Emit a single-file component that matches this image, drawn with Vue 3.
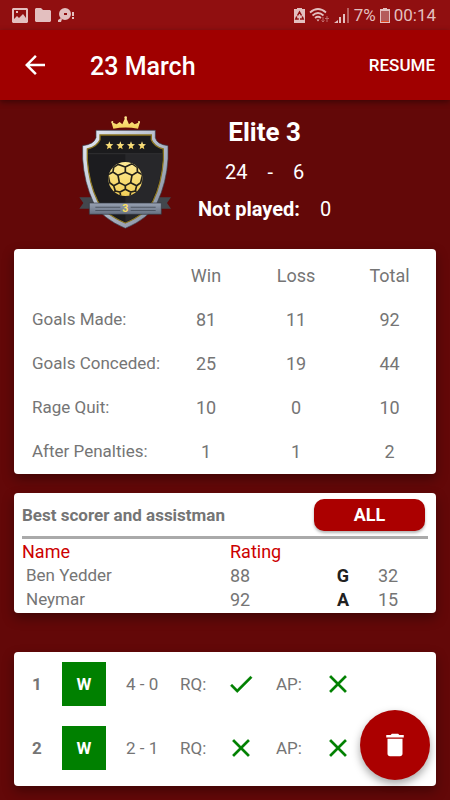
<script setup>
import { ref } from 'vue'

const title = ref('23 March')

const summary = ref({
  rank: 'Elite 3',
  won: 24,
  lost: 6,
  notPlayed: 0,
})

const stats = ref([
  { label: 'Goals Made:', win: 81, loss: 11, total: 92 },
  { label: 'Goals Conceded:', win: 25, loss: 19, total: 44 },
  { label: 'Rage Quit:', win: 10, loss: 0, total: 10 },
  { label: 'After Penalties:', win: 1, loss: 1, total: 2 },
])

const players = ref([
  { name: 'Ben Yedder', rating: 88, type: 'G', count: 32 },
  { name: 'Neymar', rating: 92, type: 'A', count: 15 },
])

const matches = ref([
  { id: 1, result: 'W', score: '4 - 0', rageQuit: true, penalties: false },
  { id: 2, result: 'W', score: '2 - 1', rageQuit: false, penalties: false },
])

const checkPath = 'M9 16.17 4.83 12l-1.42 1.41L9 19 21 7l-1.41-1.41z'
const closePath =
  'M19 6.41 17.59 5 12 10.59 6.41 5 5 6.41 10.59 12 5 17.59 6.41 19 12 13.41 17.59 19 19 17.59 13.41 12z'

function getFlagPath(value) {
  return value ? checkPath : closePath
}
</script>

<template>
  <div class="page">
    <!-- Status bar -->
    <div class="status-bar">
      <div class="status-left">
        <svg width="16" height="15" viewBox="0 0 16 15">
          <path
            fill-rule="evenodd"
            d="M1 0h14l1 1v13l-1 1H1l-1-1V1zM2 2v9l3-3 2 2 4-4 3 4V2zM4 3h2v2H4z"
          />
        </svg>
        <svg width="16" height="14" viewBox="0 0 16 14">
          <path d="M1 0h5l2 2h7l1 1v10l-1 1H1l-1-1V1z" />
        </svg>
        <svg width="17" height="15" viewBox="0 0 17 15">
          <path
            fill-rule="evenodd"
            d="M7 0a6 6 0 1 1 0 12A6 6 0 0 1 7 0zM6 5v2h3V5z"
          />
          <path d="M0 12l3-2 1 1-1 3H0zM14 4h2v4h-2zM14 9h2v2h-2z" />
        </svg>
      </div>
      <div class="status-right">
        <svg width="11" height="15" viewBox="0 0 11 15">
          <path d="M3 0h5v1h3v14H0V1h3z" />
          <path
            d="M3.500 7.500 5.500 4l2 3.500M2.800 8.500 1.800 11h3M8.200 8.500l1 2.500H6"
            fill="none"
            stroke="#900f10"
            stroke-width="1.500"
          />
        </svg>
        <svg width="21" height="15" viewBox="0 0 21 15">
          <path
            d="M1 4.500Q9 -2.500 17 4.500M3.500 7.500Q9 2.500 14.500 7.500M6 10Q9 7.500 12 10"
            fill="none"
            stroke="#e3bfbf"
            stroke-width="1.700"
          />
          <path d="M7.500 11.500h3L9 13.500z" />
          <path
            d="M14 9v5M12.500 12.500 14 14l1.500-1.500M18 14V8M16 10.500h4"
            fill="none"
            stroke="#c06a6a"
          />
        </svg>
        <svg width="16" height="15" viewBox="0 0 16 15">
          <path d="M0 15l4-3v3zM5 9h2v6H5zM9 6h2v9H9z" />
          <path d="M13 0h2v15h-2z" fill="#b86060" />
        </svg>
        <span>7%</span>
        <svg width="10" height="15" viewBox="0 0 10 15">
          <path d="M3 0h4v1h3v14H0V1h3z" />
          <path d="M1 3h8v10H1z" fill="#b45a5a" />
          <path d="M1 13h8v1H1z" fill="#e04a20" />
        </svg>
        <span>00:14</span>
      </div>
    </div>

    <!-- App bar -->
    <header class="app-bar">
      <button class="back-btn" type="button" aria-label="Back">
        <svg width="30" height="30" viewBox="0 0 24 24">
          <path d="M20 11H7.830l5.590-5.590L12 4l-8 8 8 8 1.410-1.410L7.830 13H20z" />
        </svg>
      </button>
      <h1>{{ title }}</h1>
      <button class="resume-btn" type="button">RESUME</button>
    </header>

    <main>
      <!-- Rank summary -->
      <section class="summary">
        <svg class="badge" width="92" height="113" viewBox="26 18 276 339">
          <defs>
            <linearGradient id="steel" x1="0" y1="0" x2="1" y2="1">
              <stop offset="0" stop-color="#e6ebf5" />
              <stop offset="0.5" stop-color="#b3bbcb" />
              <stop offset="1" stop-color="#7c8596" />
            </linearGradient>
            <linearGradient id="ribbon" x1="0" y1="0" x2="0" y2="1">
              <stop offset="0" stop-color="#98a2b3" />
              <stop offset="1" stop-color="#667081" />
            </linearGradient>
            <linearGradient id="gold" x1="0" y1="0" x2="0" y2="1">
              <stop offset="0" stop-color="#ffeb96" />
              <stop offset="1" stop-color="#f2cf58" />
            </linearGradient>
            <clipPath id="ball">
              <circle cx="165" cy="207" r="51" />
            </clipPath>
          </defs>
          <!-- ribbon tails -->
          <path d="M27 262h43v34H27l12-17zM302 262h-43v34h43l-12-17z" fill="#43474d" />
          <!-- shield -->
          <path
            d="M77 61h178v22q4 20 38 24v40q-4 70-33 132-26 47-95 76-69-29-95-76-29-62-33-132v-40q34-4 40-24z"
            fill="url(#steel)"
            stroke="#39404b"
            stroke-width="2"
          />
          <path
            d="M89 75h154v14q8 20 36 28v33q-5 70-31 123-21 40-83 66-62-26-83-66-26-53-31-123v-33q30-8 38-28z"
            fill="#1b1b1d"
            stroke="#8a7420"
            stroke-width="4"
          />
          <path d="M54 132h222v18q-5 68-31 121-21 40-80 66z" fill="#27272a" />
          <path d="M54 132h111v204q-59-26-80-66-26-52-31-120z" fill="#1c1c1f" />
          <path d="M54 131h222" stroke="#3a3a3e" stroke-width="2" />
          <!-- crown -->
          <path
            d="M129 56l-6-20 16 7 9-7 8 7 10-23 10 23 9-7 8 7 16-7-6 20q-37-7-74 0z"
            fill="url(#gold)"
          />
          <circle cx="166" cy="23" r="4" fill="#ffe98e" />
          <circle cx="126" cy="36" r="3" fill="#ffe98e" />
          <circle cx="206" cy="36" r="3" fill="#ffe98e" />
          <!-- stars -->
          <g fill="url(#gold)">
            <path
              v-for="x in [117, 150, 182, 215]"
              :key="x"
              :transform="`translate(${x} 106)`"
              d="M0-12 3-4l9 1-7 6 2 9-7-5-7 5 2-9-7-6 9-1z"
            />
          </g>
          <!-- ball -->
          <circle cx="165" cy="207" r="51" fill="url(#gold)" />
          <g clip-path="url(#ball)" fill="none" stroke="#25221a" stroke-width="5">
            <path d="M165 187l20 9-4 22-16 9-18-9-4-22z" />
            <path d="M165 187v-16l-22-8-4-12M165 171l20-10 3-12M185 196l16-10v-14l-16-11M143 196l-15-10 2-14 13-9" />
            <path d="M201 186l16 8M128 186l-15 8M201 172l8-6M130 172l-8-6" />
            <path d="M181 218l18 9 12-9 6-24M147 218l-17 9-12-9-5-24M199 227l-4 16M130 227l5 16" />
            <path d="M165 227v11l-16 8-14-3M165 238l16 8 14-3M149 246l2 13M181 246l-2 13M195 243l6 5M135 243l-6 5" />
          </g>
          <!-- ribbon -->
          <path d="M57 279h216v34H57z" fill="url(#ribbon)" stroke="#30363f" stroke-width="2" />
          <path d="M75 290h75v3H75zM75 300h75v3H75zM181 290h75v3h-75zM181 300h75v3h-75z" fill="#4d5562" />
          <text x="165" y="307" class="badge-level">3</text>
        </svg>
        <div class="summary-info">
          <h2>{{ summary.rank }}</h2>
          <div class="record">
            <span>{{ summary.won }}</span>
            <span>-</span>
            <span>{{ summary.lost }}</span>
          </div>
          <div class="not-played">
            <strong>Not played:</strong>
            <span>{{ summary.notPlayed }}</span>
          </div>
        </div>
      </section>

      <!-- Stats -->
      <section class="card stats">
        <table class="stats-table">
          <thead>
            <tr>
              <td></td>
              <th class="col-win" scope="col">Win</th>
              <th class="col-loss" scope="col">Loss</th>
              <th class="col-total" scope="col">Total</th>
            </tr>
          </thead>
          <tbody>
            <tr v-for="row in stats" :key="row.label">
              <th scope="row">{{ row.label }}</th>
              <td>{{ row.win }}</td>
              <td>{{ row.loss }}</td>
              <td>{{ row.total }}</td>
            </tr>
          </tbody>
        </table>
      </section>

      <!-- Best players -->
      <section class="card players">
        <div class="players-header">
          <h3>Best scorer and assistman</h3>
          <button class="all-btn" type="button">ALL</button>
        </div>
        <table class="players-table">
          <thead>
            <tr>
              <th scope="col">Name</th>
              <th class="col-rating" scope="col">Rating</th>
              <td class="col-type"></td>
              <td class="col-count"></td>
            </tr>
          </thead>
          <tbody>
            <tr v-for="player in players" :key="player.name">
              <td class="name">{{ player.name }}</td>
              <td>{{ player.rating }}</td>
              <td class="type">{{ player.type }}</td>
              <td class="count">{{ player.count }}</td>
            </tr>
          </tbody>
        </table>
      </section>

      <!-- Matches -->
      <ul class="card matches">
        <li v-for="match in matches" :key="match.id" class="match">
          <strong>{{ match.id }}</strong>
          <span class="result">{{ match.result }}</span>
          <span>{{ match.score }}</span>
          <span>RQ:</span>
          <svg class="flag" width="30" height="30" viewBox="0 0 24 24">
            <path :d="getFlagPath(match.rageQuit)" />
          </svg>
          <span>AP:</span>
          <svg class="flag" width="30" height="30" viewBox="0 0 24 24">
            <path :d="getFlagPath(match.penalties)" />
          </svg>
        </li>
      </ul>
    </main>

    <button class="delete-btn" type="button" aria-label="Delete">
      <svg width="30" height="30" viewBox="0 0 24 24">
        <path d="M6 19c0 1.100.9 2 2 2h8c1.100 0 2-.9 2-2V7H6zM19 4h-3.500l-1-1h-5l-1 1H5v2h14z" />
      </svg>
    </button>
  </div>
</template>

<style>
body {
  margin: 0;
  background: #630808;
}
</style>

<style scoped>
.page {
  min-height: 100vh;
  background: #630808;
  color: #757575;
  font-family: Roboto, 'Liberation Sans', sans-serif;
  font-size: 18px;
}

h1,
h2,
h3 {
  margin: 0;
}

button {
  padding: 0;
  border: none;
  background: none;
  color: white;
  font-family: inherit;
  cursor: pointer;
}

svg {
  display: block;
  flex: none;
}

.status-bar {
  display: flex;
  justify-content: space-between;
  align-items: center;
  height: 30px;
  padding: 0 14px 0 12px;
  background: #900f10;
  color: #e3bfbf;
  fill: #e3bfbf;
  font-size: 17px;
}

.status-left,
.status-right {
  display: flex;
  align-items: center;
  gap: 7px;
}

.status-right {
  gap: 4px;
}

.app-bar {
  position: relative;
  display: flex;
  align-items: center;
  height: 70px;
  padding: 0 15px 0 20px;
  background: #a00000;
  box-shadow: 0 2px 6px rgba(0, 0, 0, 0.4);
  color: white;
}

.back-btn svg,
.delete-btn svg {
  fill: white;
}

.app-bar h1 {
  flex: 1;
  margin-left: 40px;
  padding-top: 2px;
  font-size: 25px;
  font-weight: 500;
}

.resume-btn {
  font-size: 17px;
  font-weight: 500;
}

.summary {
  display: flex;
  gap: 27px;
  padding: 16px 0 20px 79px;
  color: white;
}

.badge-level {
  fill: #ffe060;
  font-size: 32px;
  font-weight: bold;
  text-anchor: middle;
}

.summary-info {
  display: flex;
  flex-direction: column;
  align-items: center;
  gap: 11px;
  font-size: 20px;
  line-height: 26px;
}

.summary-info h2 {
  font-size: 26px;
  line-height: 32px;
}

.record,
.not-played {
  display: flex;
  gap: 20px;
}

.card {
  margin: 0 14px;
  border-radius: 4px;
  background: white;
  box-shadow: 0 5px 12px rgba(0, 0, 0, 0.35);
}

.stats {
  padding: 4px 0 1px;
}

table {
  width: 100%;
  border-collapse: collapse;
  table-layout: fixed;
}

th,
td {
  padding: 0;
  font-weight: normal;
  white-space: nowrap;
}

.stats-table tr {
  height: 44px;
}

.stats-table td {
  text-align: center;
}

.stats-table tbody th {
  padding-left: 18px;
  font-size: 17px;
  text-align: left;
}

.col-win {
  width: 86px;
}

.col-loss {
  width: 94px;
}

.col-total {
  width: 93px;
}

.players {
  margin-top: 19px;
  padding: 0 8px 2px;
}

.players-header {
  display: flex;
  justify-content: space-between;
  align-items: center;
  height: 43px;
  padding-right: 3px;
  border-bottom: 3px solid #aaaaaa;
}

.players-header h3 {
  font-size: 17px;
}

.all-btn {
  width: 111px;
  height: 32px;
  border-radius: 10px;
  background: #ab0000;
  box-shadow: 0 2px 3px rgba(0, 0, 0, 0.3);
  font-size: 18px;
  font-weight: bold;
}

.players-table tr {
  height: 24px;
}

.players-table th {
  color: #cc0000;
  text-align: left;
}

.col-rating {
  width: 100px;
}

.col-type {
  width: 26px;
}

.col-count {
  width: 72px;
}

.name {
  padding-left: 4px;
  font-size: 17px;
}

.type {
  color: #212121;
  font-weight: bold;
  text-align: center;
}

.count {
  padding-left: 22px;
}

.matches {
  margin-top: 39px;
  padding: 0 18px 6px;
  list-style: none;
}

.match {
  display: grid;
  grid-template-columns: 30px 64px 54px 46px 50px 47px 30px;
  align-items: center;
  height: 64px;
  font-size: 17px;
}

.result {
  width: 44px;
  background: #008000;
  color: white;
  font-weight: bold;
  line-height: 44px;
  text-align: center;
}

.flag {
  fill: #008000;
  stroke: #008000;
  stroke-width: 0.2;
}

.delete-btn {
  position: fixed;
  right: 20px;
  bottom: 20px;
  display: flex;
  justify-content: center;
  align-items: center;
  width: 70px;
  height: 70px;
  border-radius: 50%;
  background: #ab0000;
  box-shadow: 0 4px 8px rgba(0, 0, 0, 0.35);
}
</style>
